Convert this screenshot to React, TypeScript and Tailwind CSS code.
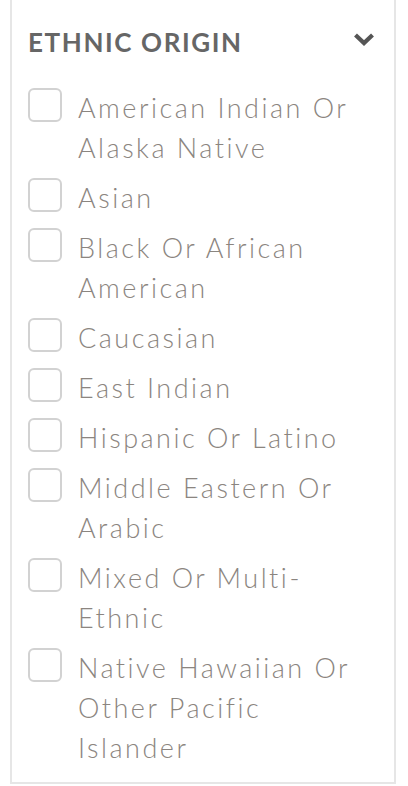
const options = [
  'American Indian Or Alaska Native',
  'Asian',
  'Black Or African American',
  'Caucasian',
  'East Indian',
  'Hispanic Or Latino',
  'Middle Eastern Or Arabic',
  'Mixed Or Multi-Ethnic',
  'Native Hawaiian Or Other Pacific Islander',
];

export default function App() {
  return (
    <div className="min-h-[786px] bg-white font-['Lato',sans-serif]">
      <div className="ml-[10px] w-[386px] border-x-2 border-b-2 border-[#e6e6e6] pl-[16px] pr-[24px] pt-[29px] pb-[14px]">
        <div className="mb-[33px] flex items-center justify-between">
          <h2 className="text-[26px] leading-[26px] font-bold tracking-[1.6px] text-[#666666] uppercase">
            Ethnic Origin
          </h2>
          {/* chevron */}
          <svg className="-mr-[5px] -mt-[7px] h-[14px] w-[22px] text-[#555555]" viewBox="0 0 22 14" fill="none">
            <polyline points="2.5,3 11,11 19.5,3" stroke="currentColor" strokeWidth="4.2" strokeLinejoin="miter" />
          </svg>
        </div>

        <ul className="flex flex-col gap-[10px]">
          {options.map((label) => (
            <li key={label}>
              <label className="flex items-start gap-[16px]">
                <span className="h-[34px] w-[34px] shrink-0 rounded-[6px] border-2 border-[#d2d2d2] bg-white" />
                <span className="text-[27px] leading-[40px] font-light tracking-[2.5px] text-[#8b8580]">
                  {label}
                </span>
              </label>
            </li>
          ))}
        </ul>
      </div>
    </div>
  );
}
